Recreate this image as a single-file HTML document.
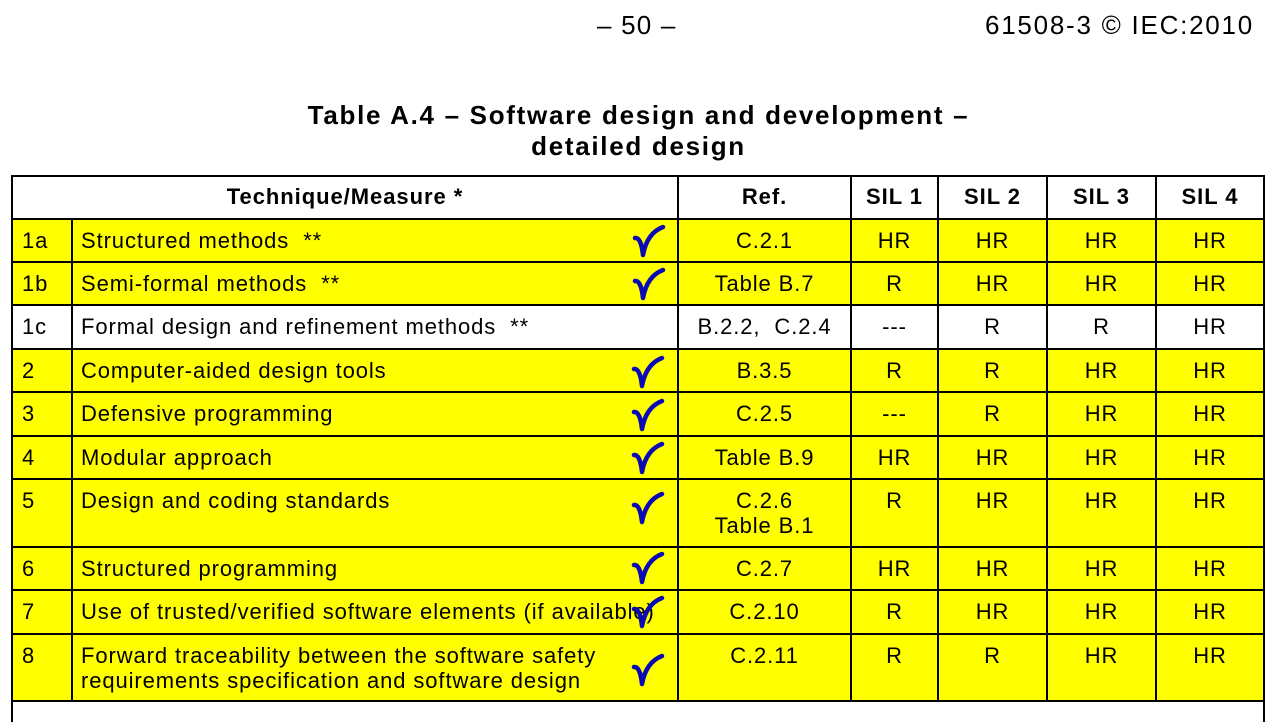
<!DOCTYPE html>
<html><head><meta charset="utf-8"><style>
body{margin:0;width:1277px;height:715px;background:#fff;position:relative;overflow:hidden;font-family:"Liberation Sans",Arial,sans-serif;color:#000}
.a{position:absolute}
.hd{font-size:26px;top:10px;letter-spacing:1.2px}
.t{font-weight:bold;font-size:26px;width:1277px;text-align:center;left:0;letter-spacing:1.7px}
.row{position:absolute;left:11px;width:1254px;border-bottom:2px solid #000;box-sizing:border-box}
.y{background:#ffff00}
.c{position:absolute;top:0;bottom:0;border-left:2px solid #000;box-sizing:border-box;font-size:22px;letter-spacing:0.9px;line-height:25px;padding-top:8px}
.n{left:0;width:60px;padding-left:9px;border-left:2px solid #000}
.d{left:60px;width:606px;padding-left:8px}
.r{left:666px;width:173px;text-align:center}
.s1{left:839px;width:87px;text-align:center}
.s2{left:926px;width:109px;text-align:center}
.s3{left:1035px;width:109px;text-align:center}
.s4{left:1144px;width:110px;text-align:center;border-right:2px solid #000}
.h .c{font-weight:bold;letter-spacing:0.95px}
svg.k{position:absolute;width:34px;height:38px}
</style></head><body>
<div class="a hd" style="left:597px">– 50 –</div>
<div class="a hd" style="left:985px;letter-spacing:1.75px">61508-3 © IEC:2010</div>
<div class="a t" style="top:100px">Table A.4 – Software design and development –</div>
<div class="a t" style="top:131px">detailed design</div>
<div class="a" style="left:11px;top:175px;width:1254px;border-top:2px solid #000"></div>

<div class="row h" style="top:176px;height:44px"><div class="c n" style="width:666px;text-align:center;padding-left:0">Technique/Measure *</div><div class="c r">Ref.</div><div class="c s1">SIL 1</div><div class="c s2">SIL 2</div><div class="c s3">SIL 3</div><div class="c s4">SIL 4</div></div>

<div class="row y" style="top:220px;height:43px"><div class="c n">1a</div><div class="c d">Structured methods&nbsp; **</div><div class="c r">C.2.1</div><div class="c s1">HR</div><div class="c s2">HR</div><div class="c s3">HR</div><div class="c s4">HR</div></div>
<div class="row y" style="top:263px;height:43px"><div class="c n">1b</div><div class="c d">Semi-formal methods&nbsp; **</div><div class="c r">Table B.7</div><div class="c s1">R</div><div class="c s2">HR</div><div class="c s3">HR</div><div class="c s4">HR</div></div>
<div class="row" style="top:306px;height:44px"><div class="c n">1c</div><div class="c d">Formal design and refinement methods&nbsp; **</div><div class="c r">B.2.2,&nbsp; C.2.4</div><div class="c s1">---</div><div class="c s2">R</div><div class="c s3">R</div><div class="c s4">HR</div></div>
<div class="row y" style="top:350px;height:43px"><div class="c n">2</div><div class="c d">Computer-aided design tools</div><div class="c r">B.3.5</div><div class="c s1">R</div><div class="c s2">R</div><div class="c s3">HR</div><div class="c s4">HR</div></div>
<div class="row y" style="top:393px;height:44px"><div class="c n">3</div><div class="c d">Defensive programming</div><div class="c r">C.2.5</div><div class="c s1">---</div><div class="c s2">R</div><div class="c s3">HR</div><div class="c s4">HR</div></div>
<div class="row y" style="top:437px;height:43px"><div class="c n">4</div><div class="c d">Modular approach</div><div class="c r">Table B.9</div><div class="c s1">HR</div><div class="c s2">HR</div><div class="c s3">HR</div><div class="c s4">HR</div></div>
<div class="row y" style="top:480px;height:68px"><div class="c n">5</div><div class="c d">Design and coding standards</div><div class="c r">C.2.6<br>Table B.1</div><div class="c s1">R</div><div class="c s2">HR</div><div class="c s3">HR</div><div class="c s4">HR</div></div>
<div class="row y" style="top:548px;height:43px"><div class="c n">6</div><div class="c d">Structured programming</div><div class="c r">C.2.7</div><div class="c s1">HR</div><div class="c s2">HR</div><div class="c s3">HR</div><div class="c s4">HR</div></div>
<div class="row y" style="top:591px;height:44px"><div class="c n">7</div><div class="c d" style="white-space:nowrap">Use of trusted/verified software elements (if available)</div><div class="c r">C.2.10</div><div class="c s1">R</div><div class="c s2">HR</div><div class="c s3">HR</div><div class="c s4">HR</div></div>
<div class="row y" style="top:635px;height:67px"><div class="c n">8</div><div class="c d" style="white-space:nowrap">Forward traceability between the software safety<br>requirements specification and software design</div><div class="c r">C.2.11</div><div class="c s1">R</div><div class="c s2">R</div><div class="c s3">HR</div><div class="c s4">HR</div></div>
<div class="a" style="left:11px;top:702px;width:1254px;height:20px;border-left:2px solid #000;border-right:2px solid #000;box-sizing:border-box"></div>

<svg class="k" style="left:632px;top:222px" viewBox="0 0 34 38"><path d="M3 16 Q9 15 11 33 Q15 11 31 5" fill="none" stroke="#0a0ab4" stroke-width="4.5" stroke-linecap="round" stroke-linejoin="round"/></svg>
<svg class="k" style="left:632px;top:265px" viewBox="0 0 34 38"><path d="M3 16 Q9 15 11 33 Q15 11 31 5" fill="none" stroke="#0a0ab4" stroke-width="4.5" stroke-linecap="round" stroke-linejoin="round"/></svg>
<svg class="k" style="left:631px;top:353px" viewBox="0 0 34 38"><path d="M3 16 Q9 15 11 33 Q15 11 31 5" fill="none" stroke="#0a0ab4" stroke-width="4.5" stroke-linecap="round" stroke-linejoin="round"/></svg>
<svg class="k" style="left:631px;top:396px" viewBox="0 0 34 38"><path d="M3 16 Q9 15 11 33 Q15 11 31 5" fill="none" stroke="#0a0ab4" stroke-width="4.5" stroke-linecap="round" stroke-linejoin="round"/></svg>
<svg class="k" style="left:631px;top:439px" viewBox="0 0 34 38"><path d="M3 16 Q9 15 11 33 Q15 11 31 5" fill="none" stroke="#0a0ab4" stroke-width="4.5" stroke-linecap="round" stroke-linejoin="round"/></svg>
<svg class="k" style="left:631px;top:489px" viewBox="0 0 34 38"><path d="M3 16 Q9 15 11 33 Q15 11 31 5" fill="none" stroke="#0a0ab4" stroke-width="4.5" stroke-linecap="round" stroke-linejoin="round"/></svg>
<svg class="k" style="left:631px;top:549px" viewBox="0 0 34 38"><path d="M3 16 Q9 15 11 33 Q15 11 31 5" fill="none" stroke="#0a0ab4" stroke-width="4.5" stroke-linecap="round" stroke-linejoin="round"/></svg>
<svg class="k" style="left:631px;top:593px" viewBox="0 0 34 38"><path d="M3 16 Q9 15 11 33 Q15 11 31 5" fill="none" stroke="#0a0ab4" stroke-width="4.5" stroke-linecap="round" stroke-linejoin="round"/></svg>
<svg class="k" style="left:631px;top:651px" viewBox="0 0 34 38"><path d="M3 16 Q9 15 11 33 Q15 11 31 5" fill="none" stroke="#0a0ab4" stroke-width="4.5" stroke-linecap="round" stroke-linejoin="round"/></svg>
</body></html>
